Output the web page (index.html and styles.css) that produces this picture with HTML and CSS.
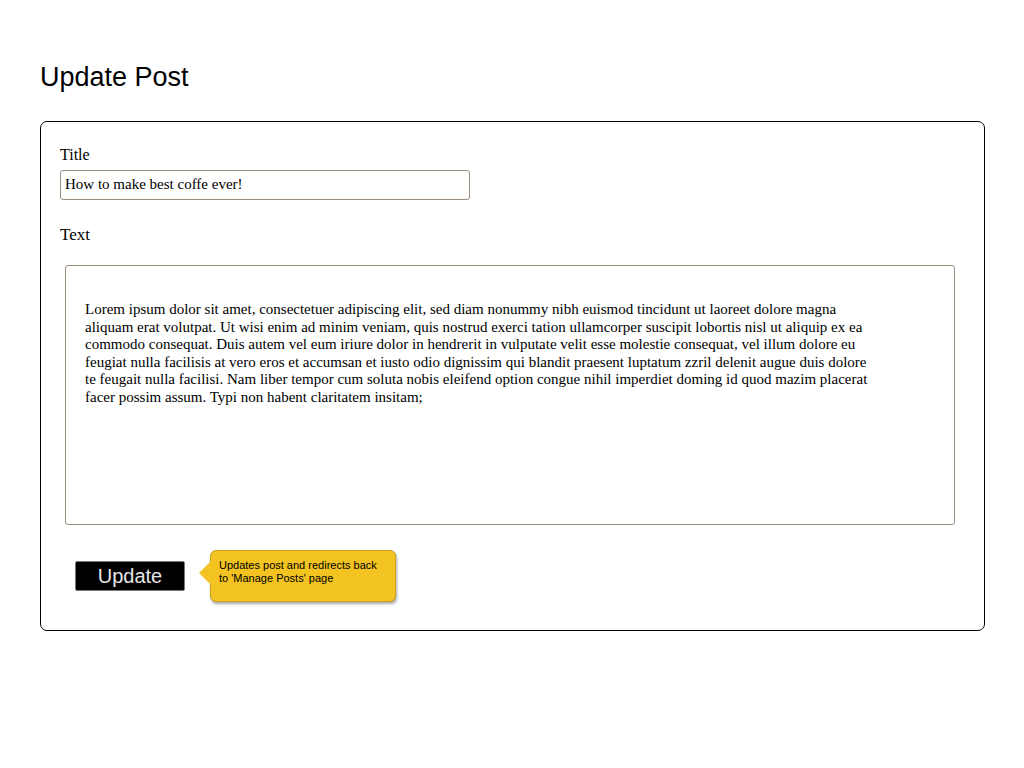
FILE: index.html
```html
<!DOCTYPE html>
<html>
<head>
<meta charset="utf-8">
<link rel="stylesheet" href="styles.css">
</head>
<body>
<div class="page">
  <h1 class="title">Update Post</h1>
  <div class="panel">
    <div class="label label-title">Title</div>
    <div class="input">How to make best coffe ever!</div>
    <div class="label label-text">Text</div>
    <div class="textarea">
      <div class="body-text">Lorem ipsum dolor sit amet, consectetuer adipiscing elit, sed diam nonummy nibh euismod tincidunt ut laoreet dolore magna<br>aliquam erat volutpat. Ut wisi enim ad minim veniam, quis nostrud exerci tation ullamcorper suscipit lobortis nisl ut aliquip ex ea<br>commodo consequat. Duis autem vel eum iriure dolor in hendrerit in vulputate velit esse molestie consequat, vel illum dolore eu<br>feugiat nulla facilisis at vero eros et accumsan et iusto odio dignissim qui blandit praesent luptatum zzril delenit augue duis dolore<br>te feugait nulla facilisi. Nam liber tempor cum soluta nobis eleifend option congue nihil imperdiet doming id quod mazim placerat<br>facer possim assum. Typi non habent claritatem insitam;</div>
    </div>
    <div class="actions">
      <div class="button">Update</div>
      <div class="tip">Updates post and redirects back to 'Manage Posts' page</div>
    </div>
  </div>
</div>
</body>
</html>
```
FILE: styles.css
```css
html, body { margin: 0; padding: 0; background: #fff; }
.page { padding: 61px 39px 0 40px; }
.title {
  margin: 0 0 28px 0;
  font-family: "Liberation Sans", Arial, sans-serif;
  font-weight: normal;
  font-size: 27px;
  line-height: 32px;
  color: #000;
}
.panel {
  border: 1px solid #000;
  border-radius: 7px;
  height: 508px;
  padding: 0 29px 0 19px;
  font-family: "Liberation Serif", "Times New Roman", serif;
  color: #000;
}
.label { font-size: 16px; line-height: 20px; }
.label-title { margin-top: 23px; }
.label-text { margin-top: 25px; font-size: 17px; }
.input {
  margin-top: 5px;
  width: 404px;
  height: 28px;
  border: 1px solid #9b8f82;
  border-radius: 3px;
  font-size: 15px;
  line-height: 27px;
  padding-left: 4px;
}
.textarea {
  margin: 20px 0 0 5px;
  height: 258px;
  border: 1px solid #9b8f82;
  border-radius: 3px;
}
.body-text {
  padding: 35px 0 0 19px;
  font-size: 15px;
  line-height: 17.5px;
  white-space: nowrap;
}
.actions {
  display: flex;
  align-items: flex-start;
  margin: 25px 0 0 15px;
}
.button {
  margin-top: 11px;
  width: 108px;
  height: 28px;
  background: #000;
  border: 1px solid #777;
  border-radius: 2px;
  color: #e6e6e6;
  font-family: "Liberation Sans", Arial, sans-serif;
  font-size: 20px;
  line-height: 28px;
  text-align: center;
}
.tip {
  position: relative;
  margin-left: 25px;
  width: 162px;
  height: 42px;
  padding: 8px 14px 0 8px;
  background: #f2c321;
  border: 1px solid #c9a11b;
  border-radius: 6px;
  box-shadow: 1px 2px 3px rgba(0,0,0,0.35);
  font-family: "Liberation Sans", Arial, sans-serif;
  font-size: 11px;
  line-height: 13px;
  color: #000;
}
.tip::before {
  content: "";
  position: absolute;
  left: -12px;
  top: 10px;
  border-top: 12px solid transparent;
  border-bottom: 12px solid transparent;
  border-right: 12px solid #f2c321;
}
```
